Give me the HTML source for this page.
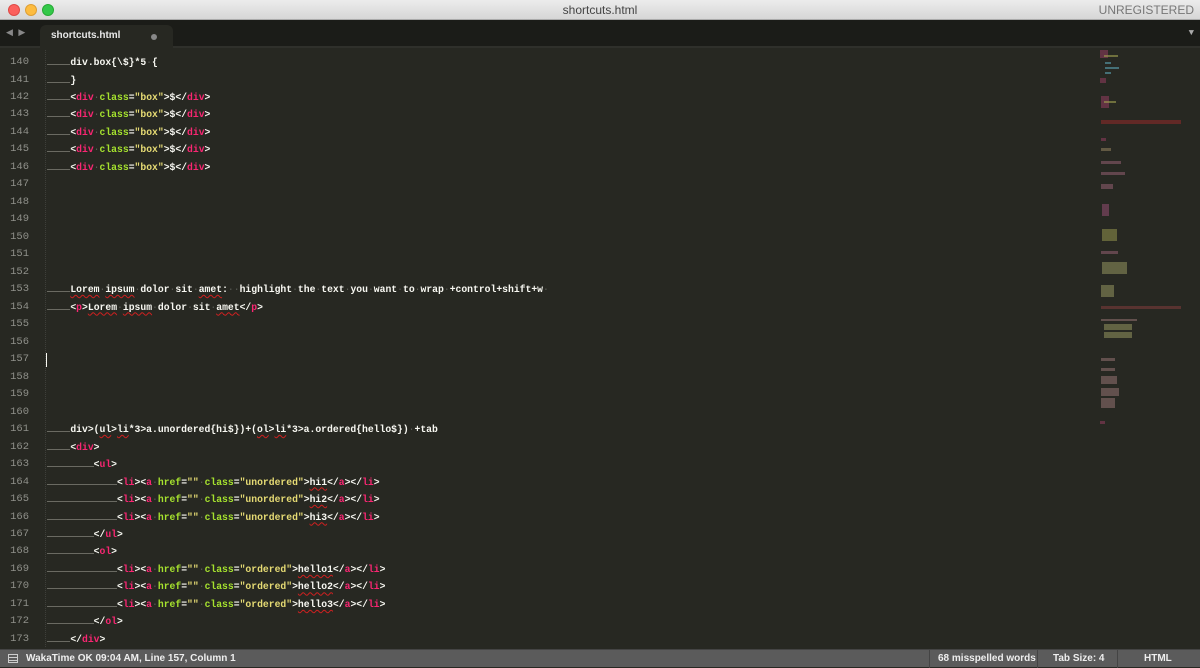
<!DOCTYPE html>
<html><head><meta charset="utf-8"><style>
*{margin:0;padding:0;box-sizing:border-box}
body{width:1200px;height:667px;overflow:hidden;background:#272822;font-family:"Liberation Mono",monospace;position:relative}
#title{position:absolute;left:0;top:0;width:1200px;height:20px;background:linear-gradient(#ececec,#d6d6d6);border-bottom:1px solid #aaa}
.dot{position:absolute;top:4px;width:12px;height:12px;border-radius:50%}
#title .t{position:absolute;left:0;width:1200px;text-align:center;top:3px;font:12px "Liberation Sans",sans-serif;color:#444}
#title .u{position:absolute;right:6px;top:3px;font:12px "Liberation Sans",sans-serif;color:#777}
#tabs{position:absolute;left:0;top:20px;width:1200px;height:28px;background:#1b1c18;border-bottom:2px solid #2f302b}
#tab{position:absolute;left:40px;top:5px;width:133px;height:23px;background:#272822;border-radius:6px 6px 0 0;font:bold 10px "Liberation Sans",sans-serif;color:#e8e8e8;padding:5px 0 0 11px}
#tab i{position:absolute;right:16px;top:9px;width:6px;height:6px;border-radius:50%;background:#888}
.ln{position:absolute;left:0;width:29px;text-align:right;font-size:10.5px;color:#8f908a}
.cd{position:absolute;left:47px;font-size:9.72px;color:#f8f8f2;white-space:pre;font-weight:bold}
.ln,.cd{height:17.48px;line-height:17.48px;margin-top:1px}
.tb{display:inline-block;width:23.33px;height:9px;border-bottom:1px solid #6a6a62;vertical-align:baseline}
.k{color:#f92672}.a{color:#a6e22e}.s{color:#e6db74}.w{color:#5a5b55;font-weight:normal}
.sq{text-decoration:underline wavy #d02020;text-decoration-thickness:1px;text-underline-offset:2px}
#status{position:absolute;left:0;top:649px;width:1200px;height:18px;background:#5b5b5b;border-top:1px solid #444;font:bold 10px "Liberation Sans",sans-serif;color:#eee}
#status span{position:absolute;top:3px}
.sep{position:absolute;top:0;width:1px;height:18px;background:#444}
.mm{position:absolute;height:2px;opacity:.6}
</style></head><body>
<div id="title">
<div class="dot" style="left:8px;background:#fc605c;border:1px solid #de4a46"></div>
<div class="dot" style="left:25px;background:#fdbc40;border:1px solid #de9f34"></div>
<div class="dot" style="left:42px;background:#34c84a;border:1px solid #27aa35"></div>
<div class="t">shortcuts.html</div><div class="u">UNREGISTERED</div>
</div>
<div id="tabs">
<div style="position:absolute;left:6px;top:8px;color:#888;font-size:9px">◀ ▶</div>
<div id="tab">shortcuts.html<i></i></div>
<div style="position:absolute;right:6px;top:8px;color:#aaa;font-size:9px">▼</div>
</div>
<div style="position:absolute;left:45px;top:50px;width:1px;height:597px;border-left:1px dotted #3e3f3a"></div>
<div style="position:absolute;left:46px;top:353px;width:1px;height:14px;background:#f8f8f2"></div>

<div class="ln" style="top:53px">140</div><div class="cd" style="top:53px"><span class="tb"></span>div.box{\$}*5<span class="w">·</span>{</div>
<div class="ln" style="top:70.5px">141</div><div class="cd" style="top:70.5px"><span class="tb"></span>}</div>
<div class="ln" style="top:88px">142</div><div class="cd" style="top:88px"><span class="tb"></span>&lt;<span class="k">div</span><span class="w">·</span><span class="a">class</span>=<span class="s">"box"</span>&gt;$&lt;/<span class="k">div</span>&gt;</div>
<div class="ln" style="top:105.4px">143</div><div class="cd" style="top:105.4px"><span class="tb"></span>&lt;<span class="k">div</span><span class="w">·</span><span class="a">class</span>=<span class="s">"box"</span>&gt;$&lt;/<span class="k">div</span>&gt;</div>
<div class="ln" style="top:122.9px">144</div><div class="cd" style="top:122.9px"><span class="tb"></span>&lt;<span class="k">div</span><span class="w">·</span><span class="a">class</span>=<span class="s">"box"</span>&gt;$&lt;/<span class="k">div</span>&gt;</div>
<div class="ln" style="top:140.4px">145</div><div class="cd" style="top:140.4px"><span class="tb"></span>&lt;<span class="k">div</span><span class="w">·</span><span class="a">class</span>=<span class="s">"box"</span>&gt;$&lt;/<span class="k">div</span>&gt;</div>
<div class="ln" style="top:157.9px">146</div><div class="cd" style="top:157.9px"><span class="tb"></span>&lt;<span class="k">div</span><span class="w">·</span><span class="a">class</span>=<span class="s">"box"</span>&gt;$&lt;/<span class="k">div</span>&gt;</div>
<div class="ln" style="top:175.4px">147</div>
<div class="ln" style="top:192.8px">148</div>
<div class="ln" style="top:210.3px">149</div>
<div class="ln" style="top:227.8px">150</div>
<div class="ln" style="top:245.3px">151</div>
<div class="ln" style="top:262.8px">152</div>
<div class="ln" style="top:280.2px">153</div><div class="cd" style="top:280.2px"><span class="tb"></span><span class="sq">Lorem</span><span class="w">·</span><span class="sq">ipsum</span><span class="w">·</span>dolor<span class="w">·</span>sit<span class="w">·</span><span class="sq">amet</span>:<span class="w">··</span>highlight<span class="w">·</span>the<span class="w">·</span>text<span class="w">·</span>you<span class="w">·</span>want<span class="w">·</span>to<span class="w">·</span>wrap<span class="w">·</span>+control+shift+w<span class="w">·</span></div>
<div class="ln" style="top:297.7px">154</div><div class="cd" style="top:297.7px"><span class="tb"></span>&lt;<span class="k">p</span>&gt;<span class="sq">Lorem</span><span class="w">·</span><span class="sq">ipsum</span><span class="w">·</span>dolor<span class="w">·</span>sit<span class="w">·</span><span class="sq">amet</span>&lt;/<span class="k">p</span>&gt;</div>
<div class="ln" style="top:315.2px">155</div>
<div class="ln" style="top:332.7px">156</div>
<div class="ln" style="top:350.2px">157</div>
<div class="ln" style="top:367.6px">158</div>
<div class="ln" style="top:385.1px">159</div>
<div class="ln" style="top:402.6px">160</div>
<div class="ln" style="top:420.1px">161</div><div class="cd" style="top:420.1px"><span class="tb"></span>div&gt;(<span class="sq">ul</span>&gt;<span class="sq">li</span>*3&gt;a.unordered{hi$})+(<span class="sq">ol</span>&gt;<span class="sq">li</span>*3&gt;a.ordered{hello$})<span class="w">·</span>+tab</div>
<div class="ln" style="top:437.6px">162</div><div class="cd" style="top:437.6px"><span class="tb"></span>&lt;<span class="k">div</span>&gt;</div>
<div class="ln" style="top:455px">163</div><div class="cd" style="top:455px"><span class="tb"></span><span class="tb"></span>&lt;<span class="k">ul</span>&gt;</div>
<div class="ln" style="top:472.5px">164</div><div class="cd" style="top:472.5px"><span class="tb"></span><span class="tb"></span><span class="tb"></span>&lt;<span class="k">li</span>&gt;&lt;<span class="k">a</span><span class="w">·</span><span class="a">href</span>=<span class="s">""</span><span class="w">·</span><span class="a">class</span>=<span class="s">"unordered"</span>&gt;<span class="sq">hi1</span>&lt;/<span class="k">a</span>&gt;&lt;/<span class="k">li</span>&gt;</div>
<div class="ln" style="top:490px">165</div><div class="cd" style="top:490px"><span class="tb"></span><span class="tb"></span><span class="tb"></span>&lt;<span class="k">li</span>&gt;&lt;<span class="k">a</span><span class="w">·</span><span class="a">href</span>=<span class="s">""</span><span class="w">·</span><span class="a">class</span>=<span class="s">"unordered"</span>&gt;<span class="sq">hi2</span>&lt;/<span class="k">a</span>&gt;&lt;/<span class="k">li</span>&gt;</div>
<div class="ln" style="top:507.5px">166</div><div class="cd" style="top:507.5px"><span class="tb"></span><span class="tb"></span><span class="tb"></span>&lt;<span class="k">li</span>&gt;&lt;<span class="k">a</span><span class="w">·</span><span class="a">href</span>=<span class="s">""</span><span class="w">·</span><span class="a">class</span>=<span class="s">"unordered"</span>&gt;<span class="sq">hi3</span>&lt;/<span class="k">a</span>&gt;&lt;/<span class="k">li</span>&gt;</div>
<div class="ln" style="top:525px">167</div><div class="cd" style="top:525px"><span class="tb"></span><span class="tb"></span>&lt;/<span class="k">ul</span>&gt;</div>
<div class="ln" style="top:542.4px">168</div><div class="cd" style="top:542.4px"><span class="tb"></span><span class="tb"></span>&lt;<span class="k">ol</span>&gt;</div>
<div class="ln" style="top:559.9px">169</div><div class="cd" style="top:559.9px"><span class="tb"></span><span class="tb"></span><span class="tb"></span>&lt;<span class="k">li</span>&gt;&lt;<span class="k">a</span><span class="w">·</span><span class="a">href</span>=<span class="s">""</span><span class="w">·</span><span class="a">class</span>=<span class="s">"ordered"</span>&gt;<span class="sq">hello1</span>&lt;/<span class="k">a</span>&gt;&lt;/<span class="k">li</span>&gt;</div>
<div class="ln" style="top:577.4px">170</div><div class="cd" style="top:577.4px"><span class="tb"></span><span class="tb"></span><span class="tb"></span>&lt;<span class="k">li</span>&gt;&lt;<span class="k">a</span><span class="w">·</span><span class="a">href</span>=<span class="s">""</span><span class="w">·</span><span class="a">class</span>=<span class="s">"ordered"</span>&gt;<span class="sq">hello2</span>&lt;/<span class="k">a</span>&gt;&lt;/<span class="k">li</span>&gt;</div>
<div class="ln" style="top:594.9px">171</div><div class="cd" style="top:594.9px"><span class="tb"></span><span class="tb"></span><span class="tb"></span>&lt;<span class="k">li</span>&gt;&lt;<span class="k">a</span><span class="w">·</span><span class="a">href</span>=<span class="s">""</span><span class="w">·</span><span class="a">class</span>=<span class="s">"ordered"</span>&gt;<span class="sq">hello3</span>&lt;/<span class="k">a</span>&gt;&lt;/<span class="k">li</span>&gt;</div>
<div class="ln" style="top:612.4px">172</div><div class="cd" style="top:612.4px"><span class="tb"></span><span class="tb"></span>&lt;/<span class="k">ol</span>&gt;</div>
<div class="ln" style="top:629.8px">173</div><div class="cd" style="top:629.8px"><span class="tb"></span>&lt;/<span class="k">div</span>&gt;</div>

<!-- minimap -->
<div class="mm" style="left:1100px;top:50px;width:8px;height:8px;background:#8a3a5a"></div>
<div class="mm" style="left:1104px;top:55px;width:14px;background:#a0a050"></div>
<div class="mm" style="left:1105px;top:62px;width:6px;background:#5aa0b0"></div>
<div class="mm" style="left:1105px;top:67px;width:14px;background:#5aa0b0"></div>
<div class="mm" style="left:1105px;top:72px;width:6px;background:#5aa0b0"></div>
<div class="mm" style="left:1100px;top:78px;width:6px;height:5px;background:#8a3a5a"></div>
<div class="mm" style="left:1101px;top:96px;width:8px;height:12px;background:#8a3a5a"></div>
<div class="mm" style="left:1104px;top:101px;width:12px;background:#a0a050"></div>
<div class="mm" style="left:1101px;top:120px;width:80px;height:4px;background:#8a2a2a"></div>
<div class="mm" style="left:1101px;top:138px;width:5px;height:3px;background:#8a3a5a"></div>
<div class="mm" style="left:1101px;top:148px;width:10px;height:3px;background:#8a7a5a"></div>
<div class="mm" style="left:1101px;top:161px;width:20px;height:3px;background:#8a5a6a"></div>
<div class="mm" style="left:1101px;top:172px;width:24px;height:3px;background:#8a5a6a"></div>
<div class="mm" style="left:1101px;top:184px;width:12px;height:5px;background:#8a5a6a"></div>
<div class="mm" style="left:1102px;top:204px;width:7px;height:12px;background:#8a4a6a"></div>
<div class="mm" style="left:1102px;top:229px;width:15px;height:12px;background:#8a8a4a"></div>
<div class="mm" style="left:1101px;top:251px;width:17px;height:3px;background:#8a5a6a"></div>
<div class="mm" style="left:1102px;top:262px;width:25px;height:12px;background:#8a8a5a"></div>
<div class="mm" style="left:1101px;top:285px;width:13px;height:12px;background:#8a8a5a"></div>
<div class="mm" style="left:1101px;top:306px;width:80px;height:3px;background:#7a3a3a"></div>
<div class="mm" style="left:1101px;top:319px;width:36px;height:2px;background:#8a6a6a"></div>
<div class="mm" style="left:1104px;top:324px;width:28px;height:6px;background:#8a8a5a"></div>
<div class="mm" style="left:1104px;top:332px;width:28px;height:6px;background:#8a8a5a"></div>
<div class="mm" style="left:1101px;top:358px;width:14px;height:3px;background:#8a6a6a"></div>
<div class="mm" style="left:1101px;top:368px;width:14px;height:3px;background:#8a6a6a"></div>
<div class="mm" style="left:1101px;top:376px;width:16px;height:8px;background:#8a6a6a"></div>
<div class="mm" style="left:1101px;top:388px;width:18px;height:8px;background:#8a6a6a"></div>
<div class="mm" style="left:1101px;top:398px;width:14px;height:10px;background:#8a6a6a"></div>
<div class="mm" style="left:1100px;top:421px;width:5px;height:3px;background:#8a3a5a"></div>

<div id="status">
<span style="left:8px;top:4px;width:10px;height:9px;border:1px solid #ccc;background:repeating-linear-gradient(#5b5b5b 0 2px,#ccc 2px 3px)"></span>
<span style="left:26px">WakaTime OK 09:04 AM, Line 157, Column 1</span>
<div class="sep" style="left:929px"></div>
<span style="left:938px">68 misspelled words</span>
<div class="sep" style="left:1037px"></div>
<span style="left:1053px">Tab Size: 4</span>
<div class="sep" style="left:1117px"></div>
<span style="left:1144px">HTML</span>
</div>
</body></html>
